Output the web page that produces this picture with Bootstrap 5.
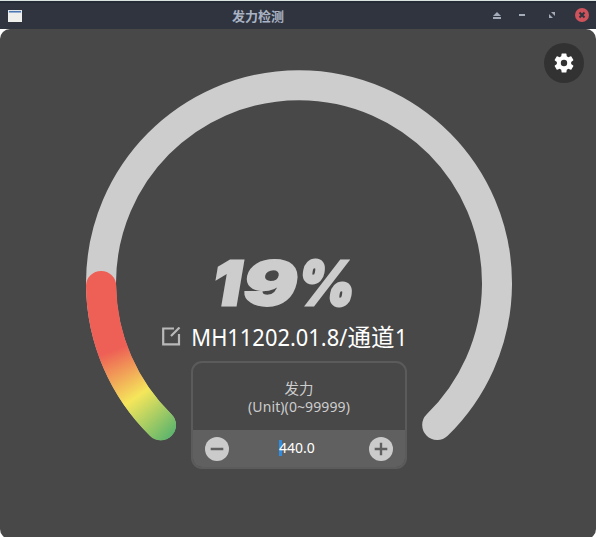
<!DOCTYPE html>
<html lang="zh-CN">
<head>
<meta charset="utf-8">
<meta name="viewport" content="width=device-width, initial-scale=1">
<title>发力检测</title>
<link href="https://cdn.jsdelivr.net/npm/bootstrap@5.3.0/dist/css/bootstrap.min.css" rel="stylesheet">
<style>
html,body{height:100%}
body{background:#fff;font-family:"Noto Sans","Noto Sans CJK SC",sans-serif;color:#fff}
.window{width:596px;height:537px}
.titlebar{height:29px;background:#2f343f;border-top:1px solid #dbe3e0;padding-top:1px;box-shadow:inset 0 2px 0 #252c35}
.title-text{font-size:13px;font-weight:700;line-height:20px;color:#a9b3c4}
.titlebar .side-start{width:80px}
.titlebar .side-end{width:160px}
.titlebar svg{overflow:visible}
.client{height:510px;background:#484848;border-radius:10px}
.gauge-layer{left:0;top:0}
.progress-arc{left:0;top:0;width:596px;height:508px;
 background:conic-gradient(from 0deg at 299px 254px,#5fb56c 0 220deg,#f5e65b 235deg,#ee6055 250deg);
 clip-path:path("M150 407A213.500 213.500 0 0 1 86 257A15.100 15.100 0 0 1 116.200 257A183 183 0 0 0 171.500 385.200A15.300 15.300 0 0 1 150 407Z")}
.settings{width:40px;height:40px;background:#323232;border:0}
.settings-row{padding:14px 12px 0 0}
.reading{margin-top:163px;height:75px}
.channel{height:36px;padding-left:162px;margin-top:-2px}
.channel-name{margin-left:9px;font-size:24px}
.edit-mark{margin-top:-2px}
.force-panel{width:216px;height:108px;margin:6px 0 0 191px;border:2px solid #5b5b5b;border-radius:11px;background:#484848;color:#cdcdcd}
.force-head{height:67px;padding-top:15px}
.force-name{font-size:14.5px;line-height:20px}
.force-range{font-size:14px;line-height:18px;letter-spacing:.1px}
.force-input{height:39px;background:#606060;margin:0 -1px;padding:0 13px 2px}
.round-btn{width:24px;height:24px;background:#cbcbcb;border:0}
.value{font-size:14px;line-height:18px;color:#fff;left:-2px;top:-1px}
.caret{width:3px;height:16px;background:#308cdd;left:0;top:1px}
.value span{position:relative}
</style>
</head>
<body>
<div class="window d-flex flex-column overflow-hidden">
 <header class="titlebar d-flex align-items-center justify-content-between flex-shrink-0">
  <div class="side-start ps-2 d-flex">
   <svg width="14" height="12" viewBox="0 0 14 12"><path fill="#eeefec" d="M0 0h14v12H0z"/><path fill="#dfe4e8" d="M0 0h14v3H0z"/><path fill="#4b77b5" d="M1 1h12v1.500H1z"/></svg>
  </div>
  <div class="title-text">发力检测</div>
  <div class="side-end d-flex justify-content-end pe-2">
   <svg width="100" height="20" viewBox="0 0 100 20"><path fill="#a4acba" d="M5 10 9 6l4 4zM5 11h8v2H5zM31 8h6v2h-6zM63 6h4v4zM61 8l4 4h-4z"/><circle cx="94" cy="9" r="7" fill="#d0535c"/><path d="m91.500 6.500 5 5m0-5-5 5" stroke="#2f343f" stroke-width="2"/></svg>
  </div>
 </header>
 <main class="client position-relative flex-shrink-0">
  <svg class="gauge-layer position-absolute" width="596" height="508" viewBox="0 0 596 508"><path d="M160.800 396A198 198 0 1 1 437.200 396" fill="none" stroke="#cdcdcd" stroke-width="30" stroke-linecap="round"/></svg>
  <div class="progress-arc position-absolute"></div>
  <div class="position-relative">
   <div class="settings-row d-flex justify-content-end">
    <button class="settings rounded-circle p-0 d-flex align-items-center justify-content-center" aria-label="设置"><svg width="24" height="24" viewBox="0 0 24 24" fill="#fff"><path d="M19.140 12.940c.04-.3.060-.61.060-.94s-.02-.64-.07-.94l2.030-1.580a.49.49 0 0 0 .12-.61l-1.920-3.320a.49.49 0 0 0-.59-.22l-2.390.96a7 7 0 0 0-1.620-.94L14.400 2.810a.48.48 0 0 0-.48-.41h-3.840a.47.47 0 0 0-.47.41l-.36 2.540a7 7 0 0 0-1.620.94l-2.390-.96a.47.47 0 0 0-.59.22L2.740 8.870a.48.48 0 0 0 .12.610l2.030 1.580a6 6 0 0 0 0 1.880l-2.030 1.580a.49.49 0 0 0-.12.610l1.920 3.320c.12.220.370.290.590.220l2.390-.96c.5.380 1.030.700 1.620.940l.36 2.540c.05.240.240.410.480.410h3.840c.24 0 .44-.170.470-.410l.36-2.540a7 7 0 0 0 1.620-.94l2.390.960c.22.080.470 0 .59-.22l1.920-3.320a.47.47 0 0 0-.12-.610zM12 15.200a3.200 3.200 0 1 1 0-6.400 3.200 3.200 0 0 1 0 6.400z"/></svg></button>
   </div>
   <div class="reading">
    <svg class="d-block" width="596" height="75" viewBox="0 217 596 75" fill="#cdcdcd" stroke="#cdcdcd" stroke-width="3" font-family="Inter, sans-serif" font-weight="900" font-style="italic" font-size="61">
     <text y="276" x="213" textLength="28" lengthAdjust="spacingAndGlyphs">1</text>
     <text y="276" x="243" textLength="54" lengthAdjust="spacingAndGlyphs" stroke-width="2">9</text>
     <text y="276" x="298" textLength="57" lengthAdjust="spacingAndGlyphs">%</text>
    </svg>
   </div>
   <div class="channel d-flex align-items-center">
    <svg class="edit-mark" width="19" height="19" viewBox="0 0 19 19" fill="none" stroke="#b9b9b9" stroke-width="2.200"><path d="M12 1.500H1.200v15.800H17V7M9 9l8.500-8.500"/></svg>
    <svg class="channel-name" width="220" height="36" fill="#fff"><text x="1.300" y="27" textLength="156" lengthAdjust="spacingAndGlyphs">MH11202.01.8/</text><text x="157.600" y="27" font-size="23.500">通道</text><text x="204.900" y="27" textLength="12.300" lengthAdjust="spacingAndGlyphs">1</text></svg>
   </div>
   <section class="force-panel overflow-hidden">
    <div class="force-head text-center"><div class="force-name">发力</div><div class="force-range">(Unit)(0~99999)</div></div>
    <div class="force-input d-flex align-items-center justify-content-between">
     <button class="round-btn rounded-circle p-0 d-flex" aria-label="减"><svg width="24" height="24"><path d="M5.700 12h12.600" stroke="#606060" stroke-width="2.400"/></svg></button>
     <div class="value position-relative"><i class="caret position-absolute"></i><span>440.0</span></div>
     <button class="round-btn rounded-circle p-0 d-flex" aria-label="加"><svg width="24" height="24"><path d="M5.700 12h12.600M12 5.700v12.600" stroke="#606060" stroke-width="2.400"/></svg></button>
    </div>
   </section>
  </div>
 </main>
</div>
<script src="https://cdn.jsdelivr.net/npm/bootstrap@5.3.0/dist/js/bootstrap.bundle.min.js"></script>
</body>
</html>
